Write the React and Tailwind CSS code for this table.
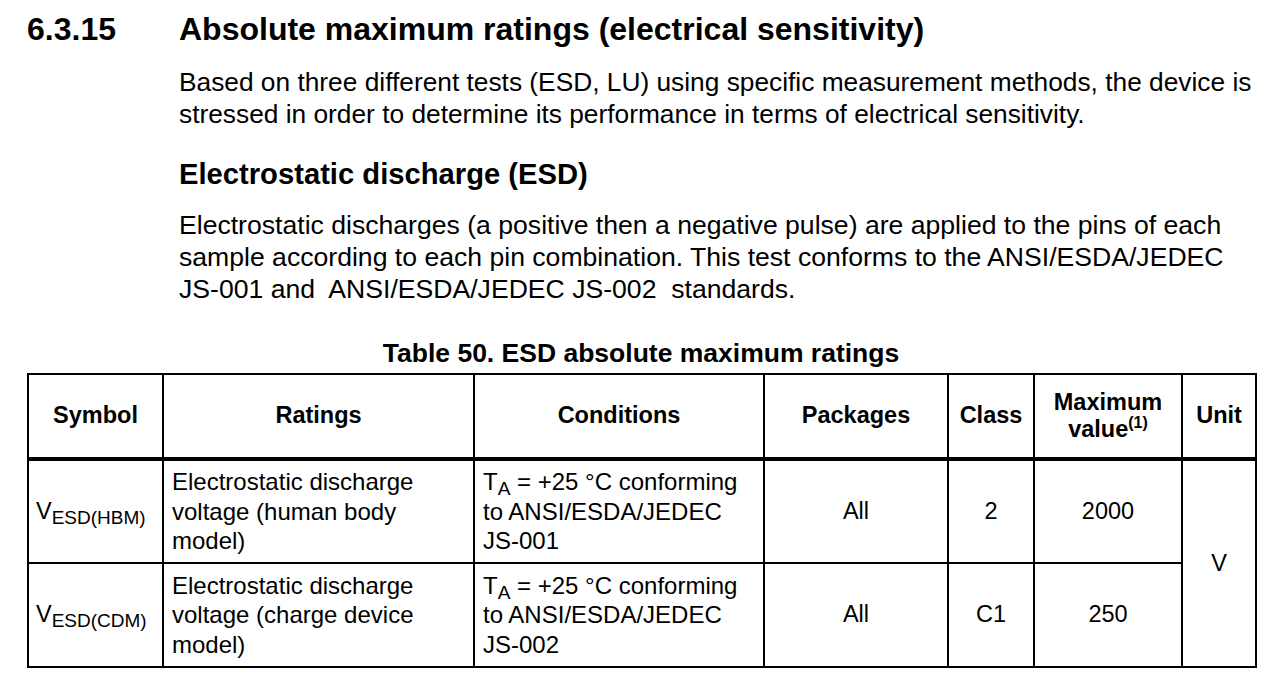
export default function App() {
  const rows = [
    { sub: "ESD(HBM)", rating: ["Electrostatic discharge", "voltage (human body", "model)"], std: "JS-001", cls: "2", max: "2000" },
    { sub: "ESD(CDM)", rating: ["Electrostatic discharge", "voltage (charge device", "model)"], std: "JS-002", cls: "C1", max: "250" },
  ];

  return (
    <div className="min-h-screen bg-white px-[27px] pt-[10px] text-black font-['Liberation_Sans',Arial,sans-serif]">
      {/* Section heading */}
      <div className="flex items-center">
        <div className="w-[152px] shrink-0 text-[32px] font-bold leading-[38px]">6.3.15</div>
        <h1 className="text-[32px] font-bold leading-[38px]">Absolute maximum ratings (electrical sensitivity)</h1>
      </div>

      <div className="ml-[152px] whitespace-nowrap">
        <p className="mt-[18px] text-[26.3px] leading-[32px]">
          Based on three different tests (ESD, LU) using specific measurement methods, the device is
          <br />
          stressed in order to determine its performance in terms of electrical sensitivity.
        </p>

        <h2 className="mt-[27px] text-[29.2px] font-bold leading-[34px]">Electrostatic discharge (ESD)</h2>

        <p className="mt-[18px] text-[26.6px] leading-[32px]">
          Electrostatic discharges (a positive then a negative pulse) are applied to the pins of each
          <br />
          sample according to each pin combination. This test conforms to the ANSI/ESDA/JEDEC
          <br />
          JS-001 and&nbsp; ANSI/ESDA/JEDEC JS-002&nbsp; standards.
        </p>
      </div>

      {/* Table */}
      <div className="mt-[33px] w-[1228px] text-center text-[26.5px] font-bold leading-[30px]">
        Table 50. ESD absolute maximum ratings
      </div>

      <table className="mt-[5px] w-[1228px] table-fixed border-collapse border-2 border-black text-center text-[23.5px] leading-[29.5px]">
        <colgroup>
          <col className="w-[135px]" />
          <col className="w-[311px]" />
          <col className="w-[290px]" />
          <col className="w-[184px]" />
          <col className="w-[86px]" />
          <col className="w-[148px]" />
          <col className="w-[74px]" />
        </colgroup>
        <thead>
          <tr className="h-[85px] border-b-4 border-black font-bold">
            <th className="border-2 border-black border-b-4">Symbol</th>
            <th className="border-2 border-black border-b-4">Ratings</th>
            <th className="border-2 border-black border-b-4">Conditions</th>
            <th className="border-2 border-black border-b-4">Packages</th>
            <th className="border-2 border-black border-b-4">Class</th>
            <th className="border-2 border-black border-b-4 leading-[27px]">
              Maximum
              <br />
              value<sup className="text-[16px] -top-[0.55em]">(1)</sup>
            </th>
            <th className="border-2 border-black border-b-4">Unit</th>
          </tr>
        </thead>
        <tbody className="font-normal">
          {rows.map((r, i) => (
            <tr key={r.sub} className="h-[104px]">
              <td className="border-2 border-black px-[7px] text-left">
                V<sub className="text-[19px]">{r.sub}</sub>
              </td>
              <td className="border-2 border-black px-[8px] text-left text-[24px]">
                {r.rating.map((l) => (
                  <div key={l}>{l}</div>
                ))}
              </td>
              <td className="border-2 border-black px-[8px] text-left text-[24px]">
                <div>
                  T<sub className="text-[19px]">A</sub> = +25 °C conforming
                </div>
                <div>to ANSI/ESDA/JEDEC</div>
                <div>{r.std}</div>
              </td>
              <td className="border-2 border-black text-center">All</td>
              <td className="border-2 border-black text-center">{r.cls}</td>
              <td className="border-2 border-black text-center">{r.max}</td>
              {i === 0 && (
                <td rowSpan={2} className="border-2 border-black text-center">
                  V
                </td>
              )}
            </tr>
          ))}
        </tbody>
      </table>
    </div>
  );
}
